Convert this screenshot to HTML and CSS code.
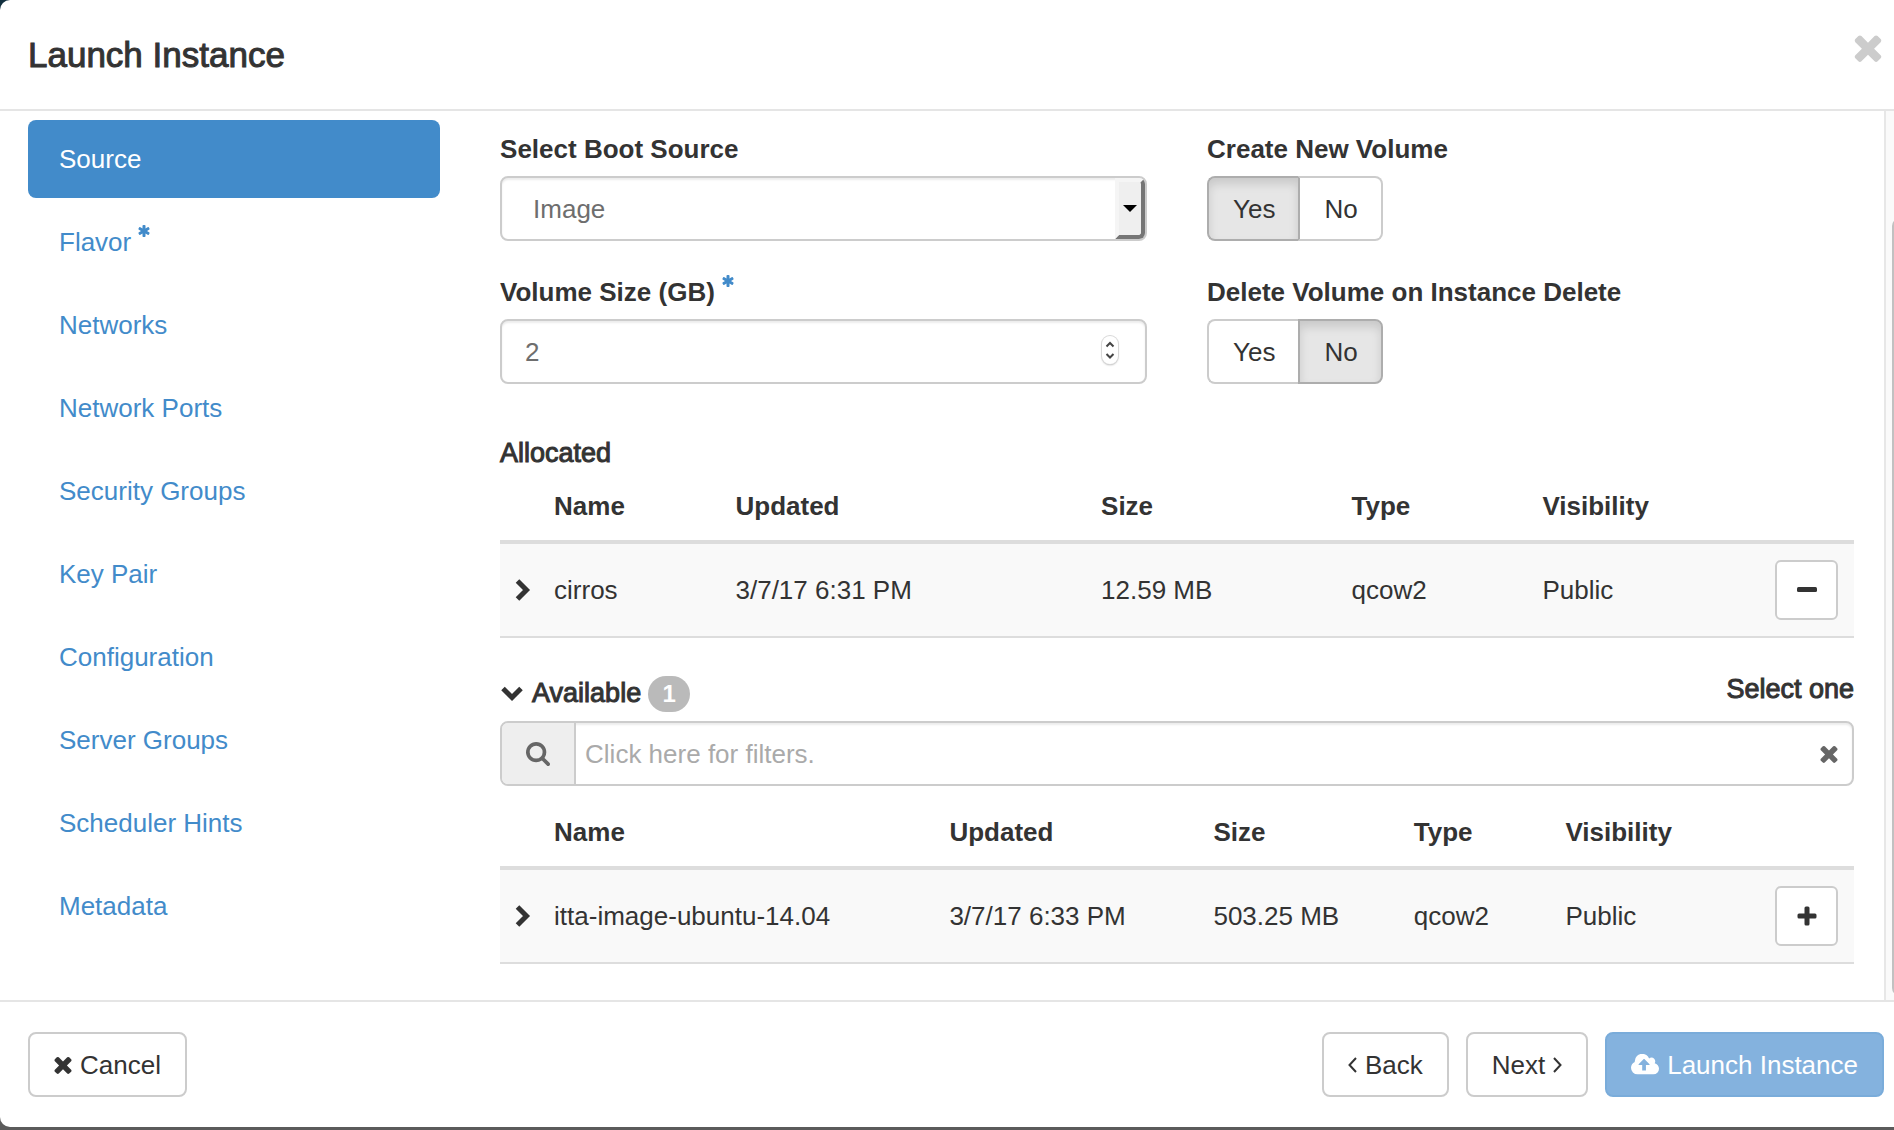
FILE: index.html
```html
<!DOCTYPE html>
<html lang="en">
<head>
<meta charset="utf-8">
<title>Launch Instance</title>
<meta name="viewport" content="width=device-width, initial-scale=1">
<link rel="stylesheet" href="styles.css">
</head>
<body>
<svg class="sprite" aria-hidden="true">
  <symbol id="times" viewBox="302 302 1188 1252"><path d="M1490 1322q0 40-28 68l-136 136q-28 28-68 28t-68-28l-294-294-294 294q-28 28-68 28t-68-28l-136-136q-28-28-28-68t28-68l294-294-294-294q-28-28-28-68t28-68l136-136q28-28 68-28t68 28l294 294 294-294q28-28 68-28t68 28l136 136q28 28 28 68t-28 68l-294 294 294 294q28 28 28 68z"/></symbol>
  <symbol id="asterisk" viewBox="180 128 1432 1536"><path d="M1546 1050q46 26 59.5 77.5t-12.5 97.5l-64 110q-26 46-77.5 59.5t-97.5-12.5l-266-153v307q0 52-38 90t-90 38h-128q-52 0-90-38t-38-90v-307l-266 153q-46 26-97.5 12.5t-77.5-59.5l-64-110q-26-46-12.5-97.5t59.5-77.5l266-154-266-154q-46-26-59.5-77.5t12.5-97.5l64-110q26-46 77.5-59.5t97.5 12.5l266 153v-307q0-52 38-90t90-38h128q52 0 90 38t38 90v307l266-153q46-26 97.5-12.5t77.5 59.5l64 110q26 46 12.5 97.5t-59.5 77.5l-266 154z"/></symbol>
  <symbol id="search" viewBox="64 128 1664 1664"><path d="M1216 832q0-185-131.5-316.5t-316.5-131.5-316.5 131.5-131.5 316.5 131.5 316.5 316.5 131.5 316.5-131.5 131.5-316.5zm512 832q0 52-38 90t-90 38q-54 0-90-38l-343-342q-179 124-399 124-143 0-273.5-55.5t-225-150-150-225-55.5-273.5 55.5-273.5 150-225 225-150 273.5-55.5 273.5 55.5 225 150 150 225 55.5 273.5q0 220-124 399l343 343q37 37 37 90z"/></symbol>
  <symbol id="cloud" viewBox="0 256 1920 1280"><path d="M1280 864q0-14-9-23l-352-352q-9-9-23-9t-23 9l-351 351q-10 12-10 24 0 14 9 23t23 9h224v352q0 13 9.5 22.5t22.5 9.5h192q13 0 22.5-9.5t9.5-22.5v-352h224q13 0 22.5-9.5t9.5-22.5zm640 288q0 159-112.5 271.5t-271.5 112.5h-1088q-185 0-316.5-131.5t-131.5-316.5q0-130 70-240t188-165q-2-30-2-43 0-212 150-362t362-150q156 0 285.5 87t188.5 231q71-62 166-62 106 0 181 75t75 181q0 76-41 138 130 31 213.5 135.5t83.5 238.5z"/></symbol>
  <symbol id="chevron" viewBox="0 0 16 24"><path class="line-thick" d="M2.5 3 11.5 12 2.5 21"/></symbol>
  <symbol id="chevron-down" viewBox="0 0 24 16"><path class="line-thick" d="M3 2.5 12 11.5 21 2.5"/></symbol>
  <symbol id="angle-left" viewBox="0 0 9 16"><path class="line-thin" d="M8 1 1.500 8 8 15"/></symbol>
  <symbol id="angle-right" viewBox="0 0 9 16"><path class="line-thin" d="M1 1 7.500 8 1 15"/></symbol>
  <symbol id="minus" viewBox="0 0 20 20"><rect x="0" y="7" width="20" height="5" rx="1.500"/></symbol>
  <symbol id="plus" viewBox="0 0 20 20"><path d="M9 .5h2q1.500 0 1.500 1.500v5.500H18q1.500 0 1.500 1.500v2q0 1.500-1.500 1.500h-5.500V18q0 1.500-1.500 1.500H9q-1.500 0-1.500-1.500v-5.500H2Q.5 12.500.5 11V9Q.5 7.500 2 7.500h5.500V2Q7.500.5 9 .5z"/></symbol>
</svg>

<div class="modal" role="dialog" aria-labelledby="title">
  <header class="modal-header">
    <h1 class="modal-title" id="title">Launch Instance</h1>
    <button class="close" type="button" aria-label="Close"><svg class="icon icon-close"><use href="#times"/></svg></button>
  </header>

  <div class="modal-body">
    <div class="wizard">
      <nav class="steps" aria-label="Steps">
        <a class="step step-active" href="#source">Source</a>
        <a class="step" href="#flavor">Flavor <svg class="icon required"><use href="#asterisk"/></svg></a>
        <a class="step" href="#networks">Networks</a>
        <a class="step" href="#ports">Network Ports</a>
        <a class="step" href="#security">Security Groups</a>
        <a class="step" href="#keypair">Key Pair</a>
        <a class="step" href="#configuration">Configuration</a>
        <a class="step" href="#servergroups">Server Groups</a>
        <a class="step" href="#hints">Scheduler Hints</a>
        <a class="step" href="#metadata">Metadata</a>
      </nav>

      <main class="content">
        <form class="form">
          <div class="field">
            <label class="label" for="boot">Select Boot Source</label>
            <div class="control-wrap">
              <select class="control control-select" id="boot"><option>Image</option></select>
              <span class="select-arrow" aria-hidden="true"></span>
            </div>
          </div>
          <fieldset class="field">
            <legend class="label">Create New Volume</legend>
            <div class="toggle">
              <label class="toggle-option"><input class="toggle-input" type="radio" name="create" checked>Yes</label>
              <label class="toggle-option"><input class="toggle-input" type="radio" name="create">No</label>
            </div>
          </fieldset>
          <div class="field">
            <label class="label" for="size">Volume Size (GB) <svg class="icon required"><use href="#asterisk"/></svg></label>
            <div class="control-wrap">
              <input class="control control-number" id="size" type="number" value="2">
              <span class="stepper" aria-hidden="true">
                <svg viewBox="0 0 16 28"><path class="stepper-line" d="M4.500 10.500 8 7l3.500 3.500M4.500 18 8 21.500l3.500-3.500"/></svg>
              </span>
            </div>
          </div>
          <fieldset class="field">
            <legend class="label">Delete Volume on Instance Delete</legend>
            <div class="toggle">
              <label class="toggle-option"><input class="toggle-input" type="radio" name="delete">Yes</label>
              <label class="toggle-option"><input class="toggle-input" type="radio" name="delete" checked>No</label>
            </div>
          </fieldset>
        </form>

        <section class="allocated">
          <h2 class="heading">Allocated</h2>
          <table class="table table-allocated">
            <colgroup><col class="col-expand"><col class="col-name"><col class="col-updated"><col class="col-size"><col class="col-type"><col><col class="col-action"></colgroup>
            <thead><tr><td></td><th>Name</th><th>Updated</th><th>Size</th><th>Type</th><th>Visibility</th><td></td></tr></thead>
            <tbody><tr>
              <td class="cell-expand"><button class="expander" type="button" aria-label="Expand"><svg class="icon icon-chevron"><use href="#chevron"/></svg></button></td>
              <td>cirros</td><td>3/7/17 6:31 PM</td><td>12.59 MB</td><td>qcow2</td><td>Public</td>
              <td><button class="row-btn" type="button" aria-label="Remove"><svg class="icon icon-action"><use href="#minus"/></svg></button></td>
            </tr></tbody>
          </table>
        </section>

        <section class="available">
          <div class="available-head">
            <h2 class="heading heading-available"><svg class="icon icon-down"><use href="#chevron-down"/></svg>Available <span class="badge">1</span></h2>
            <span class="hint">Select one</span>
          </div>
          <div class="filter">
            <span class="filter-addon"><svg class="icon icon-search"><use href="#search"/></svg></span>
            <input class="filter-input" type="text" aria-label="Filters" placeholder="Click here for filters.">
            <button class="filter-clear" type="button" aria-label="Clear filters"><svg class="icon icon-times"><use href="#times"/></svg></button>
          </div>
          <table class="table table-available">
            <colgroup><col class="col-expand"><col class="col-name"><col class="col-updated"><col class="col-size"><col class="col-type"><col><col class="col-action"></colgroup>
            <thead><tr><td></td><th>Name</th><th>Updated</th><th>Size</th><th>Type</th><th>Visibility</th><td></td></tr></thead>
            <tbody><tr>
              <td class="cell-expand"><button class="expander" type="button" aria-label="Expand"><svg class="icon icon-chevron"><use href="#chevron"/></svg></button></td>
              <td>itta-image-ubuntu-14.04</td><td>3/7/17 6:33 PM</td><td>503.25 MB</td><td>qcow2</td><td>Public</td>
              <td><button class="row-btn" type="button" aria-label="Add"><svg class="icon icon-action"><use href="#plus"/></svg></button></td>
            </tr></tbody>
          </table>
        </section>
      </main>
    </div>
    <div class="scrollbar" aria-hidden="true"><div class="thumb"></div></div>
  </div>

  <footer class="modal-footer">
    <button class="btn btn-cancel" type="button"><svg class="icon icon-times"><use href="#times"/></svg>Cancel</button>
    <button class="btn" type="button"><svg class="icon icon-angle"><use href="#angle-left"/></svg>Back</button>
    <button class="btn" type="button">Next<svg class="icon icon-angle"><use href="#angle-right"/></svg></button>
    <button class="btn btn-primary" type="button" disabled><svg class="icon icon-cloud"><use href="#cloud"/></svg>Launch Instance</button>
  </footer>
</div>
</body>
</html>
```
FILE: styles.css
```css
* { box-sizing: border-box; }

body {
  margin: 0;
  background: linear-gradient(#12303f, #5b5b5b 40%);
  color: #333;
  font: 26px/37px "Liberation Sans", Arial, sans-serif;
}

button, input, select { font: inherit; color: inherit; margin: 0; }
button { cursor: pointer; }
.sprite { display: none; }
.icon { flex: none; fill: currentColor; }
.line-thick { fill: none; stroke: currentColor; stroke-width: 5; }
.line-thin { fill: none; stroke: currentColor; stroke-width: 2; }

.modal {
  display: flex;
  flex-direction: column;
  min-height: calc(100vh - 3px);
  margin-bottom: 3px;
  background: #fff;
  border-radius: 10px 0 0 10px;
}

/* Header */
.modal-header {
  display: flex;
  justify-content: space-between;
  align-items: flex-start;
  padding: 34px 12px 33px 28px;
  border-bottom: 2px solid #e5e5e5;
}
.modal-title {
  margin: 0;
  font-size: 35px;
  line-height: 42px;
  font-weight: 400;
  -webkit-text-stroke: 1px currentColor;
}
.close { display: flex; padding: 0; border: 0; background: none; color: #ccc; }
.icon-close { width: 28px; height: 28px; }

/* Body */
.modal-body { display: flex; flex: 1; }
.wizard {
  flex: 1;
  display: grid;
  grid-template-columns: 7fr 23fr;
  column-gap: 60px;
  padding: 9px 30px 36px 28px;
}
.steps { display: flex; flex-direction: column; gap: 5px; }
.step {
  padding: 21px 31px 20px;
  border-radius: 8px;
  color: #428bca;
  text-decoration: none;
}
.step-active { background: #428bca; color: #fff; }
.required { width: 12px; height: 12px; color: #428bca; vertical-align: 14px; }

.scrollbar { width: 10px; border-left: 2px solid #e7e7e7; background: #fafafa; overflow: hidden; padding: 107px 0 4px 6px; }
.thumb { width: 16px; height: 100%; border-radius: 8px; background: #c1c1c1; }

/* Form */
.content { padding-top: 11px; }
.form { display: grid; grid-template-columns: 1fr 1fr; gap: 33px 60px; }
.field { min-width: 0; margin: 0; padding: 0; border: 0; }
.label { display: block; padding: 0; margin-bottom: 8px; height: 37px; font-weight: 700; white-space: nowrap; }
.control-wrap { position: relative; }
.control {
  display: block;
  width: 100%;
  height: 65px;
  padding: 13px 23px 11px;
  border: 2px solid #ccc;
  border-radius: 8px;
  background: #fff;
  box-shadow: inset 0 2px 2px rgba(0, 0, 0, .08);
  color: #6e6e6e;
  appearance: none;
}
.control-select { padding-left: 31px; }
.control-number { appearance: textfield; }
.control-number::-webkit-inner-spin-button { appearance: none; }
.select-arrow {
  position: absolute;
  top: 2px;
  right: 2px;
  bottom: 2px;
  width: 30px;
  border: 4px solid;
  border-color: #f5f5f5 #767676 #767676 #f5f5f5;
  border-radius: 0 6px 6px 0;
  background: #efefef;
  pointer-events: none;
  display: grid;
  place-items: center;
}
.select-arrow::after {
  content: "";
  border: 7px solid transparent;
  border-top-color: #000;
  border-bottom-width: 0;
}
.stepper {
  position: absolute;
  top: 17px;
  right: 29px;
  width: 16px;
  height: 28px;
  border-radius: 8px;
  background: #fff;
  box-shadow: 0 0 0 1px #d8d8d8, 0 1px 2px #aaa;
}
.stepper svg { display: block; width: 16px; height: 28px; }
.stepper-line { fill: none; stroke: #444; stroke-width: 2; }

.toggle { display: flex; }
.toggle-option {
  height: 65px;
  padding: 13px 23px 11px 24px;
  border: 2px solid #ccc;
  background: #fff;
}
.toggle-option:first-child { border-radius: 8px 0 0 8px; border-right: 0; }
.toggle-option:last-child { border-radius: 0 8px 8px 0; }
.toggle-option:has(:checked) {
  background: #e6e6e6;
  border-color: #adadad;
  box-shadow: inset 0 6px 10px rgba(0, 0, 0, .125);
}
.toggle-option:has(:checked) + .toggle-option { border-left-color: #adadad; }
.toggle-input { position: absolute; opacity: 0; pointer-events: none; }

/* Transfer tables */
.heading, .hint { margin: 0; font-size: 27px; font-weight: 400; -webkit-text-stroke: 1px currentColor; }
.allocated { margin-top: 51px; }
.table { width: 100%; table-layout: fixed; border-collapse: collapse; white-space: nowrap; }
.table th { text-align: left; }
.table th { padding: 16px 0 15px 15px; }
.table tbody td { padding: 16px 0 16px 15px; }
.table tbody tr { background: #f9f9f9; border-top: 4px solid #ddd; border-bottom: 2px solid #ddd; }
.col-expand { width: 39px; }
.col-action { width: 94px; }
.table-allocated .col-name { width: 13.4%; }
.table-allocated .col-updated { width: 27%; }
.table-allocated .col-size { width: 18.5%; }
.table-allocated .col-type { width: 14.1%; }
.table-available .col-name { width: 29.2%; }
.table-available .col-updated { width: 19.5%; }
.table-available .col-size { width: 14.8%; }
.table-available .col-type { width: 11.2%; }
.expander { display: flex; padding: 0; border: 0; background: none; }
.icon-chevron { width: 16px; height: 24px; }
.row-btn {
  display: grid;
  place-items: center;
  width: 63px;
  height: 60px;
  padding: 0;
  border: 2px solid #ccc;
  border-radius: 6px;
  background: #fff;
}
.icon-action { width: 20px; height: 20px; }

.available { margin-top: 33px; }
.available-head { display: flex; justify-content: space-between; align-items: flex-start; height: 50px; }
.heading-available { display: flex; align-items: center; margin-top: 4px; }
.icon-down { width: 24px; height: 16px; margin-right: 8px; }
.badge {
  min-width: 42px;
  height: 36px;
  margin-left: 7px;
  border-radius: 18px;
  background: #bababa;
  color: #fff;
  font-size: 24px;
  line-height: 36px;
  font-weight: 700;
  text-align: center;
  -webkit-text-stroke: 0;
}
.filter {
  display: flex;
  height: 65px;
  margin-bottom: 12px;
  border: 2px solid #ccc;
  border-radius: 8px;
  box-shadow: inset 0 2px 2px rgba(0, 0, 0, .08);
  overflow: hidden;
  color: #666;
}
.filter-addon { display: grid; place-items: center; width: 74px; border-right: 2px solid #ccc; background: #eee; }
.icon-search { width: 24px; height: 24px; }
.filter-input { flex: 1; min-width: 0; padding: 2px 9px 0; border: 0; background: none; }
.filter-input::placeholder { color: #aaa; opacity: 1; }
.filter-clear { display: flex; align-items: center; padding: 0 14px; border: 0; background: none; }
.icon-times { width: 18px; height: 18px; }

/* Footer */
.modal-footer {
  display: flex;
  justify-content: flex-end;
  gap: 17px;
  padding: 30px 10px 30px 28px;
  border-top: 2px solid #e5e5e5;
}
.btn {
  display: flex;
  align-items: center;
  gap: 8px;
  height: 65px;
  padding: 1px 24px 0;
  border: 2px solid #ccc;
  border-radius: 8px;
  background: #fff;
  white-space: nowrap;
}
.btn-cancel { margin-right: auto; }
.btn-primary { background: #84b2de; border-color: #7aacda; color: #fff; cursor: not-allowed; }
.icon-angle { width: 9px; height: 16px; }
.icon-cloud { width: 28px; height: 22px; }
```
